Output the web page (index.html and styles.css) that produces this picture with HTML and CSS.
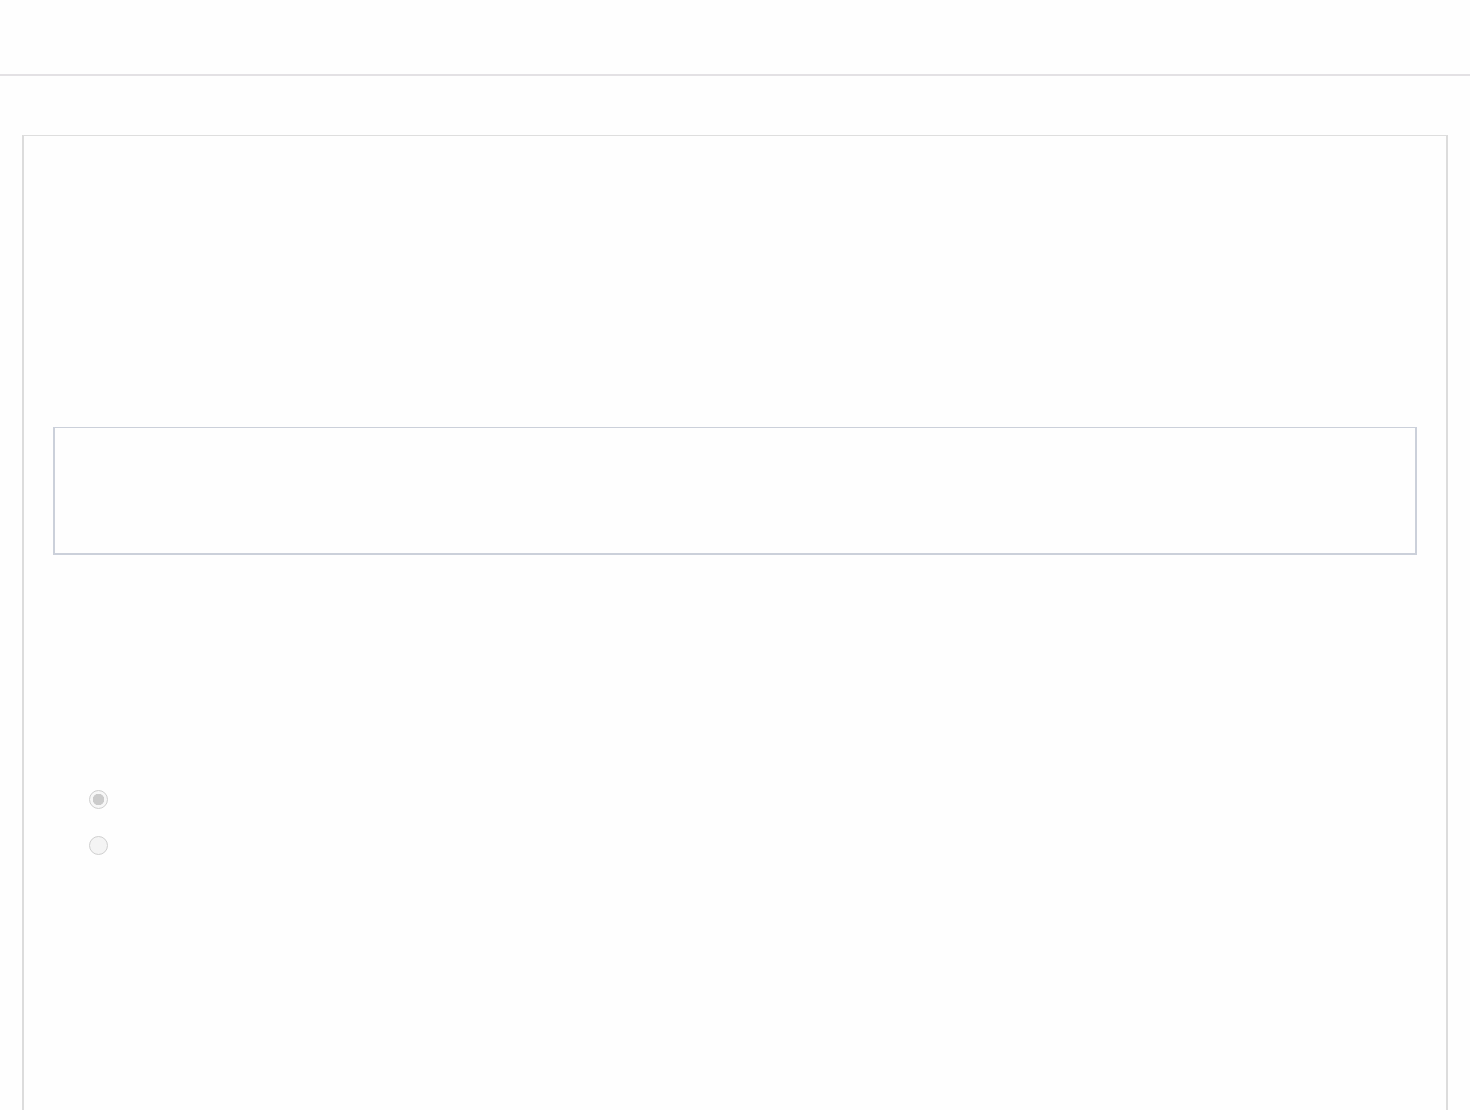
FILE: index.html
```html
<!DOCTYPE html>
<html lang="en">
<head>
<meta charset="utf-8">
<title>Form</title>
<link rel="stylesheet" href="styles.css">
</head>
<body>
<header class="topbar"></header>
<main class="page">
  <section class="card">
    <div class="panel"></div>
    <div class="options">
      <label class="option"><input class="radio" type="radio" name="opt" checked disabled></label>
      <label class="option"><input class="radio" type="radio" name="opt" disabled></label>
    </div>
  </section>
</main>
</body>
</html>
```
FILE: styles.css
```css
html, body {
  margin: 0;
  padding: 0;
  background: #fefefe;
  font-family: "Liberation Sans", Arial, sans-serif;
  overflow: hidden;
}
.topbar {
  height: 74px;
  border-bottom: 2px solid #e3e1e4;
  background: #fefefe;
}
.page {
  padding: 59px 22px 0 22px;
}
.card {
  border-top: 1px solid #dedede;
  border-left: 2px solid #dcdcdc;
  border-right: 2px solid #dcdcdc;
  min-height: 1100px;
  padding: 291px 29px 0 29px;
  box-sizing: border-box;
}
.panel {
  height: 125px;
  border-top: 1px solid #cbd0da;
  border-left: 2px solid #cbd0da;
  border-right: 2px solid #cbd0da;
  border-bottom: 2px solid #cbd0da;
}
.options {
  display: flex;
  flex-direction: column;
  gap: 27px;
  padding: 235px 0 0 36px;
}
.option {
  display: flex;
  align-items: center;
  height: 19px;
}
.radio {
  appearance: none;
  -webkit-appearance: none;
  margin: 0;
  width: 19px;
  height: 19px;
  border-radius: 50%;
  border: 1.5px solid #cfcfcf;
  background: #f4f4f4;
  box-sizing: border-box;
}
.radio:checked {
  background: radial-gradient(circle, #cbcbcb 0 5.5px, #f7f7f7 6px);
}
```
